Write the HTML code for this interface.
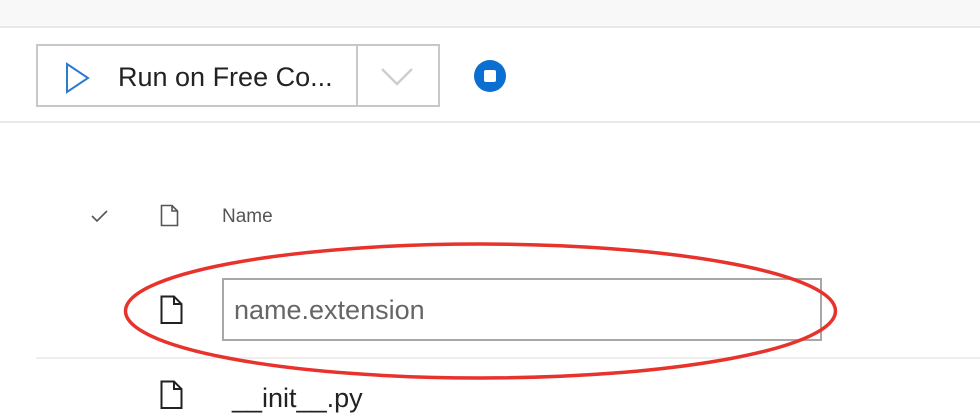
<!DOCTYPE html>
<html><head><style>
body{margin:0;width:980px;height:400px;overflow:hidden;background:#fff;font-family:"Liberation Sans",sans-serif;position:relative}
.a{position:absolute}
</style></head><body>
<div class="a" style="left:0;top:0;width:980px;height:26px;background:#f8f8f8;border-bottom:2px solid #e8e8e8"></div>
<div class="a" style="left:36px;top:44px;width:400px;height:59px;border:2px solid #c8c8c8"></div>
<div class="a" style="left:356px;top:44px;width:2px;height:63px;background:#c8c8c8"></div>
<svg class="a" style="left:64px;top:62px" width="28" height="34"><path d="M3 2 L24 16 L3 30 Z" fill="none" stroke="#2b7bcf" stroke-width="2"/></svg>
<div class="a" style="left:118px;top:62px;font-size:27px;color:#222">Run on Free Co...</div>
<svg class="a" style="left:380px;top:66px" width="36" height="22"><path d="M2 3 L17 18 L32 3" fill="none" stroke="#cfcfcf" stroke-width="2.5"/></svg>
<div class="a" style="left:474px;top:60px;width:32px;height:32px;border-radius:50%;background:#0a6fd0"></div>
<div class="a" style="left:484px;top:70px;width:12px;height:12px;border-radius:2px;background:#fff"></div>
<div class="a" style="left:0;top:121px;width:980px;height:2px;background:#e8e8e8"></div>
<svg class="a" style="left:90px;top:208px" width="20" height="16"><path d="M2 8 L7 13 L17 3" fill="none" stroke="#555" stroke-width="1.6"/></svg>
<svg class="a" style="left:160px;top:204px" width="20" height="24"><path d="M1.5 1.5 H12 L17.5 7 V21.5 H1.5 Z M12 1.5 V7 H17.5" fill="none" stroke="#555" stroke-width="1.6"/></svg>
<div class="a" style="left:222px;top:206px;font-size:19px;color:#555">Name</div>
<svg class="a" style="left:160px;top:295px" width="24" height="30"><path d="M1.5 1.5 H14 L21.5 9 V28 H1.5 Z M14 1.5 V9 H21.5" fill="none" stroke="#222" stroke-width="2"/></svg>
<div class="a" style="left:222px;top:278px;width:596px;height:59px;border:2px solid #a8a8a8"></div>
<div class="a" style="left:234px;top:295px;font-size:27px;color:#666">name.extension</div>
<div class="a" style="left:36px;top:357px;width:944px;height:2px;background:#eee"></div>
<svg class="a" style="left:160px;top:380px" width="24" height="30"><path d="M1.5 1.5 H14 L21.5 9 V28 H1.5 Z M14 1.5 V9 H21.5" fill="none" stroke="#222" stroke-width="2"/></svg>
<div class="a" style="left:232px;top:383px;font-size:27px;color:#222">__init__.py</div>
<svg class="a" style="left:0;top:0" width="980" height="400"><ellipse cx="480.5" cy="311" rx="355" ry="67" fill="none" stroke="#e8322c" stroke-width="3.5"/></svg>
</body></html>
